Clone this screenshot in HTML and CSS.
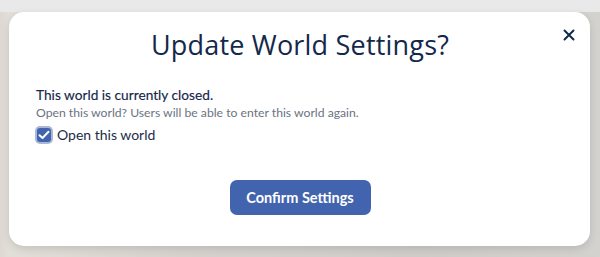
FILE: index.html
```html
<!DOCTYPE html>
<html>
<head>
<meta charset="utf-8">
<link rel="stylesheet" href="styles.css">
</head>
<body>
<div class="backdrop">
  <div class="modal">
    <button class="close" aria-label="Close">
      <svg width="12" height="12" viewBox="0 0 12 12"><path d="M1.5 1.5 L10.5 10.5 M10.5 1.5 L1.5 10.5" stroke="#13294b" stroke-width="2" stroke-linecap="round"/></svg>
    </button>
    <h1 class="title">Update World Settings?</h1>
    <div class="body">
      <p class="lead">This world is currently closed.</p>
      <p class="sub">Open this world? Users will be able to enter this world again.</p>
      <label class="check">
        <span class="box">
          <svg width="12" height="10" viewBox="0 0 12 10"><path d="M1.5 5.2 L4.5 8 L10.5 1.8" fill="none" stroke="#fff" stroke-width="2" stroke-linecap="round" stroke-linejoin="round"/></svg>
        </span>
        <span>Open this world</span>
      </label>
    </div>
    <div class="actions">
      <button class="confirm">Confirm Settings</button>
    </div>
  </div>
</div>
</body>
</html>
```
FILE: styles.css
```css
html, body {
  margin: 0;
  padding: 0;
}
body {
  width: 600px;
  height: 257px;
  overflow: hidden;
  background: #e9e9e9;
}
.backdrop {
  width: 600px;
  height: 257px;
  box-sizing: border-box;
  padding: 12px 10px 0 9px;
  background:
    linear-gradient(to bottom, #e9e9e9 0, #e9e9e9 12px, transparent 12px),
    linear-gradient(to right, #ddd8d2 0, #e2ded8 9px, #d6d3cf 30%, #cfcdca 70%, #d4d2cf 100%);
}
.modal {
  position: relative;
  width: 581px;
  height: 234px;
  box-sizing: border-box;
  background: #fff;
  border-radius: 15px;
  box-shadow: 0 3px 8px rgba(0,0,0,0.12);
  padding: 14px 26px 0 27px;
  display: flex;
  flex-direction: column;
}
.close {
  position: absolute;
  top: 13px;
  right: 11px;
  width: 20px;
  height: 20px;
  border: 0;
  background: none;
  padding: 0;
  display: flex;
  align-items: center;
  justify-content: center;
}
.title {
  margin: 0;
  text-align: center;
  font-family: "Open Sans", sans-serif;
  font-weight: 400;
  font-size: 27px;
  line-height: 38px;
  color: #13294b;
  letter-spacing: 0.2px;
}
.body {
  margin-top: 21px;
  font-family: Lato, "Open Sans", sans-serif;
}
.lead {
  margin: 0;
  font-size: 13.7px;
  font-weight: 400;
  line-height: 19px;
  color: #14264a;
  -webkit-text-stroke: 0.15px #14264a;
}
.sub {
  margin: 0;
  font-size: 12.2px;
  line-height: 17px;
  color: #6b7382;
}
.check {
  margin-top: 5px;
  display: flex;
  align-items: center;
  gap: 6px;
  font-size: 14px;
  color: #1c2d4a;
}
.box {
  width: 14px;
  height: 14px;
  border-radius: 3px;
  background: #4263ae;
  box-shadow: 0 0 0 2px #a9b7d9;
  margin-left: 1px;
  display: flex;
  align-items: center;
  justify-content: center;
}
.actions {
  margin-top: 37px;
  display: flex;
  justify-content: center;
}
.confirm {
  width: 141px;
  height: 35px;
  border: 0;
  border-radius: 7px;
  background: #4264ae;
  color: #fff;
  font-family: Lato, "Open Sans", sans-serif;
  font-weight: 700;
  font-size: 14.5px;
  padding: 0;
}
```
